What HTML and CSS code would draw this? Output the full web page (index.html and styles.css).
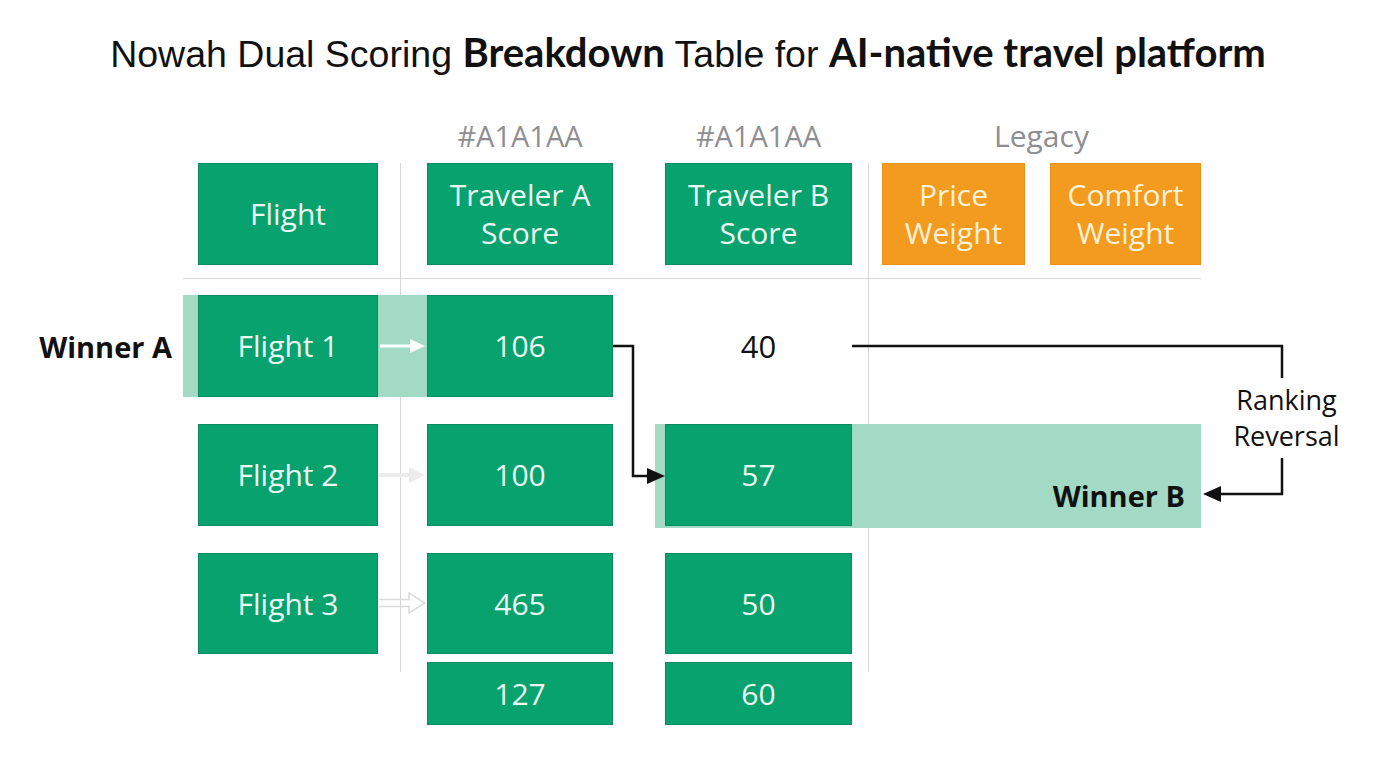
FILE: index.html
```html
<!DOCTYPE html>
<html lang="en">
<head>
<meta charset="utf-8">
<title>Nowah Dual Scoring Breakdown Table</title>
<link rel="stylesheet" href="styles.css">
</head>
<body>
<h1 class="title">Nowah Dual Scoring <b>Breakdown</b> Table for <b>AI-native travel platform</b></h1>

<div class="board">
  <div class="col-label col-a">#A1A1AA</div>
  <div class="col-label col-b">#A1A1AA</div>
  <div class="col-label col-legacy">Legacy</div>

  <div class="vline vline-1"></div>
  <div class="vline vline-2"></div>
  <div class="hline"></div>

  <div class="cell head c-flight">Flight</div>
  <div class="cell head c-a">Traveler A<br>Score</div>
  <div class="cell head c-b">Traveler B<br>Score</div>
  <div class="cell head orange c-price">Price<br>Weight</div>
  <div class="cell head orange c-comfort">Comfort<br>Weight</div>

  <div class="band band-a"></div>
  <div class="band band-b"><span class="winner-b">Winner B</span></div>

  <div class="winner-a">Winner A</div>

  <div class="cell r1 c-flight">Flight 1</div>
  <div class="cell r1 c-a">106</div>
  <div class="plain r1 c-b">40</div>

  <div class="cell r2 c-flight">Flight 2</div>
  <div class="cell r2 c-a">100</div>
  <div class="cell r2 c-b">57</div>

  <div class="cell r3 c-flight">Flight 3</div>
  <div class="cell r3 c-a">465</div>
  <div class="cell r3 c-b">50</div>

  <div class="cell r4 c-a">127</div>
  <div class="cell r4 c-b">60</div>

  <div class="reversal">Ranking<br>Reversal</div>

  <svg class="connectors" width="1376" height="620" viewBox="0 0 1376 620" aria-hidden="true">
    <!-- white arrow Flight 1 -> 106 -->
    <line x1="380" y1="231" x2="412" y2="231" stroke="#ffffff" stroke-width="3"/>
    <polygon points="410,224 425,231 410,238" fill="#ffffff"/>
    <!-- faint arrow Flight 2 -->
    <line x1="379" y1="360" x2="412" y2="360" stroke="#ececec" stroke-width="4"/>
    <polygon points="409,352 425,360 409,368" fill="#ececec"/>
    <!-- hollow arrow Flight 3 -->
    <path d="M379,484.5 H409 V478 L425,488 L409,498 V491.5 H379" fill="none" stroke="#dadada" stroke-width="1.5"/>
    <!-- 106 -> 57 -->
    <path d="M613,231 H633 V361 H650" fill="none" stroke="#111" stroke-width="2.5"/>
    <polygon points="647,353 665,361 647,369" fill="#111"/>
    <!-- 40 -> Ranking Reversal -> Winner B -->
    <path d="M852,231 H1282 V263" fill="none" stroke="#111" stroke-width="2.5"/>
    <path d="M1282,343 V379 H1218" fill="none" stroke="#111" stroke-width="2.5"/>
    <polygon points="1221,371 1203,379 1221,387" fill="#111"/>
  </svg>
</div>
</body>
</html>
```

FILE: styles.css
```css
html, body {
  margin: 0;
  padding: 0;
  background: #ffffff;
}

body {
  width: 1376px;
  height: 768px;
  overflow: hidden;
  font-family: "Open Sans", "Liberation Sans", sans-serif;
  color: #111;
}

.title {
  margin: 0;
  padding-top: 30px;
  height: 44px;
  line-height: 44px;
  text-align: center;
  font-family: "Liberation Sans", Arial, sans-serif;
  font-weight: 400;
  font-size: 37.5px;
  letter-spacing: 0;
  color: #111;
}

.title b {
  font-family: "Lato", "Liberation Sans", sans-serif;
  font-weight: 700;
  font-size: 40px;
}

.board {
  position: relative;
  margin-top: 41px;
  display: grid;
  grid-template-columns: 183px 15px 180px 49px 186px 52px 187px 30px 143px 25px 151px 175px;
  grid-template-rows: 40px 8px 102px 30px 102px 27px 102px 27px 101px 8px 63px;
}

.col-label {
  grid-row: 1;
  display: flex;
  align-items: center;
  justify-content: center;
  font-size: 29px;
  color: #8e8e92;
}
.col-a { grid-column: 5; }
.col-b { grid-column: 7; }
.col-legacy { grid-column: 9 / 12; font-size: 30px; }

.vline {
  grid-row: 3 / 12;
  position: relative;
}
.vline::before {
  content: "";
  position: absolute;
  top: 0;
  bottom: 53px;
  left: 50%;
  width: 1px;
  background: #d6d6d6;
}
.vline-1 { grid-column: 4; }
.vline-1::before { left: 22px; }
.vline-2 { grid-column: 8; }
.vline-2::before { left: 16px; }

.hline {
  grid-row: 4;
  grid-column: 2 / 12;
  align-self: start;
  margin-top: 13px;
  height: 1px;
  background: #d9d9d9;
}

.cell {
  display: flex;
  align-items: center;
  justify-content: center;
  text-align: center;
  box-sizing: border-box;
  background: #08a26e;
  border: 1px solid #0b8c60;
  color: #eaf8f1;
  font-size: 30px;
  line-height: 38px;
  position: relative;
  z-index: 1;
}

.cell.orange {
  background: #f29b1e;
  border-color: #eb9216;
  color: #fdf1d8;
}

.plain {
  display: flex;
  align-items: center;
  justify-content: center;
  font-size: 31px;
  color: #111;
}

.head { grid-row: 3; }
.r1 { grid-row: 5; }
.r2 { grid-row: 7; }
.r3 { grid-row: 9; }
.r4 { grid-row: 11; }

.c-flight { grid-column: 3; }
.c-a { grid-column: 5; }
.c-b { grid-column: 7; }
.c-price { grid-column: 9; }
.c-comfort { grid-column: 11; }

.band {
  background: #a3dac6;
  z-index: 0;
}
.band-a {
  grid-row: 5;
  grid-column: 2 / 5;
}
.band-b {
  grid-row: 7;
  grid-column: 7 / 12;
  margin-left: -10px;
  margin-bottom: -2px;
  display: flex;
  align-items: flex-end;
  justify-content: flex-end;
  padding: 0 16px 13px 0;
}

.winner-b {
  font-weight: 700;
  font-size: 29px;
  color: #111;
}

.winner-a {
  grid-row: 5;
  grid-column: 1;
  display: flex;
  align-items: center;
  justify-content: flex-end;
  padding-right: 11px;
  font-weight: 700;
  font-size: 29px;
  color: #111;
}

.reversal {
  grid-row: 5 / 8;
  grid-column: 12;
  display: flex;
  align-items: center;
  justify-content: center;
  text-align: center;
  padding-top: 14px;
  margin-right: 4px;
  font-size: 27px;
  line-height: 36px;
  color: #111;
}

.connectors {
  position: absolute;
  left: 0;
  top: 0;
  z-index: 2;
  pointer-events: none;
}
```
